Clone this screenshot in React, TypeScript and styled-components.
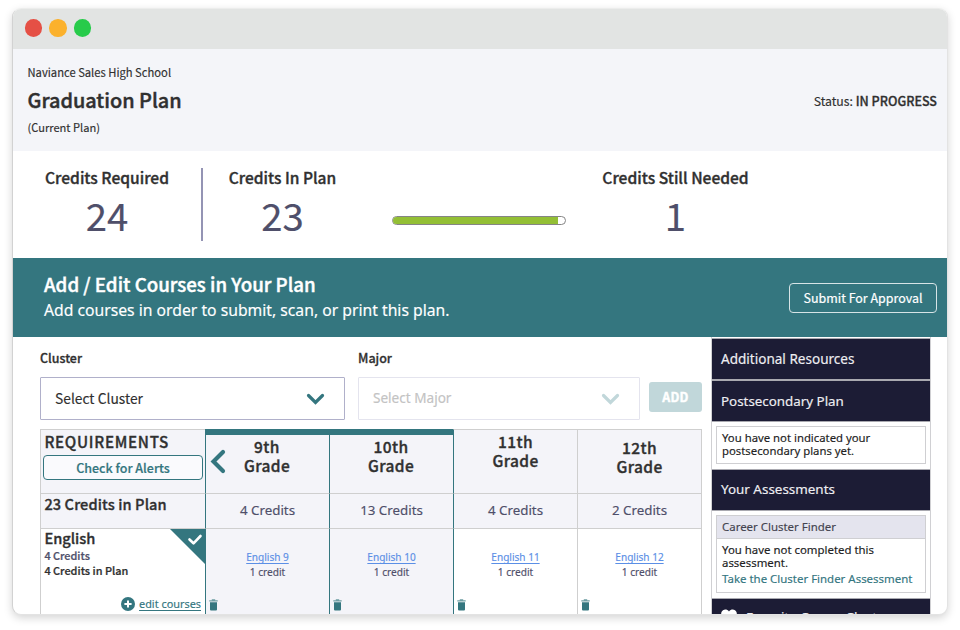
import React from "react";
import styled, { createGlobalStyle, css } from "styled-components";

const source = `"Noto Sans CJK SC", "Noto Sans", sans-serif`;
const ubuntu = `"Noto Sans", "Open Sans", sans-serif`;
const teal = "#34767f";
const ink = "#303030";
const slate = "#4f4f6a";
const line = "#cfcfcf";
const tint = "#f4f4f9";

const GlobalStyle = createGlobalStyle`
  * { box-sizing: border-box; }
  body { margin: 0; background: #fff; overflow: hidden; }
`;

type TextProps = {
  $size: number;
  $lh: number;
  $medium?: boolean;
  $alt?: boolean;
  $color?: string;
  $track?: number;
  $mt?: number;
};

const Text = styled.div<TextProps>`
  font-family: ${(p) => (p.$alt ? ubuntu : source)};
  font-size: ${(p) => p.$size}px;
  line-height: ${(p) => p.$lh}px;
  font-weight: ${(p) => (p.$medium ? 500 : 400)};
  color: ${(p) => p.$color ?? ink};
  letter-spacing: ${(p) => p.$track ?? 0}px;
  margin-top: ${(p) => p.$mt ?? 0}px;
  -webkit-text-stroke: ${(p) => (p.$medium ? p.$size * 0.022 : 0.15)}px currentColor;
  white-space: nowrap;
`;

const Stage = styled.main`
  width: 960px;
  height: 630px;
  padding: 8px 12px 15px 12px;
  background: #fff;
`;

const Window = styled.div`
  width: 936px;
  height: 607px;
  border-radius: 9px;
  overflow: hidden;
  display: flex;
  flex-direction: column;
  background: #fff;
  border: 1px solid #e3e3e3;
  border-top-color: #ecedec;
  border-left-color: #d2d2d2;
  box-shadow: 0 3px 9px rgba(0, 0, 0, 0.17);
`;

const TitleBar = styled.div`
  height: 40px;
  flex: none;
  display: flex;
  align-items: center;
  gap: 7px;
  padding: 0 0 2px 11.5px;
  background: #e2e4e3;
`;

const Light = styled.i<{ $color: string }>`
  width: 17.6px;
  height: 17.6px;
  border-radius: 50%;
  background: ${(p) => p.$color};
`;

const PlanHeader = styled.header`
  height: 102px;
  flex: none;
  display: flex;
  justify-content: space-between;
  padding: 15px 10px 0 14.5px;
  background: #f4f5f9;
`;

const Status = styled.div`
  display: flex;
  align-items: baseline;
  height: 20px;
  margin-top: 27px;
`;

const Summary = styled.section`
  height: 107px;
  flex: none;
  display: flex;
  padding-top: 17px;
`;

const Stat = styled.div<{ $width: number; $divided?: boolean }>`
  width: ${(p) => p.$width}px;
  height: 73px;
  text-align: center;
  ${(p) => p.$divided && css`border-right: 2px solid #9494b4;`}
`;

const Track = styled.div`
  width: 174px;
  height: 9px;
  margin: 48px 0 0 30px;
  border: 1px solid #858585;
  border-radius: 5px;
  background: #fff;
  overflow: hidden;
`;

const Fill = styled.div`
  width: 96%;
  height: 100%;
  background: #93bf35;
`;

const Banner = styled.section`
  height: 79px;
  flex: none;
  display: flex;
  justify-content: space-between;
  padding: 14px 10px 0 31px;
  background: ${teal};
`;

const SubmitButton = styled.button`
  width: 148px;
  height: 30px;
  margin-top: 11px;
  padding: 0 0 1px;
  border: 1px solid #d7e4e6;
  border-radius: 4px;
  background: transparent;
  color: #fff;
  font: 400 12.46px/24px ${source};
  -webkit-text-stroke: 0.2px currentColor;
`;

const Body = styled.div`
  flex: 1;
  min-height: 0;
  display: flex;
  overflow: hidden;
`;

const Planner = styled.section`
  width: 662px;
  margin-left: 27px;
  flex: none;
`;

const Picker = styled.div`
  height: 92px;
  display: flex;
  padding-top: 12px;
`;

const Field = styled.div<{ $width: number; $gap: number }>`
  width: ${(p) => p.$width}px;
  margin-right: ${(p) => p.$gap}px;
`;

const Select = styled.div<{ $disabled?: boolean }>`
  height: 43px;
  margin-top: 10px;
  display: flex;
  align-items: center;
  justify-content: space-between;
  padding: 0 19px 1px 14px;
  border: 1px solid ${(p) => (p.$disabled ? "#e4e4ee" : "#b0b0ca")};
  border-radius: 1px;

  svg {
    margin-top: 2px;
  }
`;

const AddButton = styled.button`
  width: 53px;
  height: 30px;
  margin-top: 33px;
  padding: 0;
  border: 0;
  border-radius: 3px;
  background: #c1d7da;
  color: #fff;
  font: 700 12.4px/24px ${source};
  letter-spacing: 0.3px;
  -webkit-text-stroke: 0.4px currentColor;
`;

const Table = styled.div`
  display: grid;
  grid-template-columns: 165px repeat(4, 124px);
  grid-template-rows: 64px 35px 90px;
  border-right: 1px solid ${line};
`;

const Cell = styled.div<{ $active?: boolean; $edge?: boolean; $plain?: boolean }>`
  border-top: 1px solid ${line};
  border-left: 1px solid ${(p) => (p.$edge ? teal : line)};
  background: ${(p) => (p.$plain ? "#fff" : tint)};
  min-width: 0;
`;

const Lead = styled(Cell)<{ $up?: number }>`
  padding-left: 3.4px;
  position: relative;

  > ${Text}:first-of-type {
    margin-top: ${(p) => -(p.$up ?? 0)}px;
  }
`;

const GradeHead = styled(Cell)<{ $top: number }>`
  text-align: center;
  padding-top: ${(p) => p.$top}px;
  position: relative;
  ${(p) =>
    p.$active &&
    css`
      border-top: 6px solid ${teal};
      border-left: 0;
      box-shadow: inset 1px 0 ${teal};
    `}
`;

const Centered = styled(Cell)`
  text-align: center;
`;

const Course = styled(Centered)`
  display: flex;
  flex-direction: column;
  align-items: center;
  padding-top: 20px;
`;

const CourseLink = styled(Text)`
  text-decoration: underline;
  text-underline-offset: 1.5px;
  text-decoration-thickness: 1px;
`;

const AlertsButton = styled.button`
  display: block;
  width: 160px;
  height: 25px;
  margin: 2px 0 0 -1.4px;
  padding: 0;
  border: 1px solid ${teal};
  border-radius: 4px;
  background: #fafafd;
  color: ${teal};
  font: 500 12.5px/22px ${source};
  -webkit-text-stroke: 0.2px currentColor;
`;

const BackArrow = styled.svg`
  position: absolute;
  left: 5px;
  top: 14px;
`;

const Corner = styled.svg`
  position: absolute;
  right: 0;
  top: 0;
`;

const EditRow = styled.div`
  display: flex;
  align-items: center;
  justify-content: flex-end;
  gap: 4px;
  margin-top: 18px;
  padding-right: 4px;
`;

const Trash = styled.svg`
  align-self: flex-start;
  margin: 19px 0 0 3px;
`;

const Sidebar = styled.aside`
  width: 220px;
  margin-left: 9px;
  flex: none;
  padding-top: 1px;
  border: 1px solid #d0d0d3;
  border-width: 0 1px;
`;

const PanelTitle = styled.div<{ $lift?: number }>`
  height: 42px;
  display: flex;
  align-items: center;
  gap: 9px;
  padding: 0 0 ${(p) => p.$lift ?? 0}px 9px;
  background: #1c1c35;
  border-top: 1px solid #a9a9b0;
  border-bottom: 1px solid #a9a9b0;
`;

const Card = styled.div<{ $height: number; $bottom: number }>`
  height: ${(p) => p.$height}px;
  margin: 4px 4px ${(p) => p.$bottom}px;
  border: 1px solid #cfcfd2;
  padding-left: 5px;
`;

const CardTitle = styled.div`
  height: 23px;
  margin-left: -5px;
  padding-left: 5px;
  background: #e4e4ee;
  border-bottom: 1px solid #cfcfd2;
`;

const Chevron = ({ color }: { color: string }) => (
  <svg width="19" height="13" viewBox="0 0 19 13">
    <path d="M2.5 2.5 9.5 9.5 16.5 2.5" fill="none" stroke={color} strokeWidth="3.2" strokeLinecap="round" />
  </svg>
);

const TrashIcon = () => (
  <Trash width="9" height="12" viewBox="0 0 9 12">
    <path d="M.3 1.9h8.4M2.8 1h3.4" stroke="#6d9da3" strokeWidth="1.3" fill="none" />
    <path d="M1 3.2h7v7.2q0 1-1 1H2q-1 0-1-1z" fill={teal} />
  </Trash>
);

const grades = [
  { name: "9th", total: "4 Credits", course: "English 9", top: 2, active: true, edge: true },
  { name: "10th", total: "13 Credits", course: "English 10", top: 2, active: true, edge: true },
  { name: "11th", total: "4 Credits", course: "English 11", top: 2, active: false, edge: true },
  { name: "12th", total: "2 Credits", course: "English 12", top: 8, active: false, edge: false },
];

export default function App() {
  return (
    <Stage>
      <GlobalStyle />
      <Window>
        <TitleBar>
          <Light $color="#e55045" />
          <Light $color="#fbb12c" />
          <Light $color="#27cb4a" />
        </TitleBar>

        <PlanHeader>
          <div>
            <Text $size={11.21} $lh={16}>Naviance Sales High School</Text>
            <Text $size={19.89} $lh={28} $mt={6} $medium>Graduation Plan</Text>
            <Text $size={11.1} $lh={16} $mt={5}>(Current Plan)</Text>
          </div>
          <Status>
            <Text as="span" $size={12.27} $lh={20}>Status:&nbsp;</Text>
            <Text as="span" $size={12.55} $lh={20} $medium>IN PROGRESS</Text>
          </Status>
        </PlanHeader>

        <Summary>
          <Stat $width={190} $divided>
            <Text $size={15.58} $lh={22} $mt={-2} $medium>Credits Required</Text>
            <Text $size={38.3} $lh={50} $mt={2} $color={slate}>24</Text>
          </Stat>
          <Stat $width={159}>
            <Text $size={15.53} $lh={22} $mt={-2} $medium>Credits In Plan</Text>
            <Text $size={38.3} $lh={50} $mt={2} $color={slate}>23</Text>
          </Stat>
          <Track>
            <Fill />
          </Track>
          <Stat $width={219}>
            <Text $size={15.59} $lh={22} $mt={-2} $medium>Credits Still Needed</Text>
            <Text $size={38.3} $lh={50} $mt={2} $color={slate}>1</Text>
          </Stat>
        </Summary>

        <Banner>
          <div>
            <Text $size={18.71} $lh={24} $color="#fff" $medium>Add / Edit Courses in Your Plan</Text>
            <Text $size={15.72} $lh={24} $mt={2} $color="#fff" $alt>
              Add courses in order to submit, scan, or print this plan.
            </Text>
          </div>
          <SubmitButton>Submit For Approval</SubmitButton>
        </Banner>

        <Body>
          <Planner>
            <Picker>
              <Field $width={305} $gap={13}>
                <Text $size={12.44} $lh={18} $medium>Cluster</Text>
                <Select>
                  <Text $size={13.82} $lh={20}>Select Cluster</Text>
                  <Chevron color={teal} />
                </Select>
              </Field>
              <Field $width={282} $gap={9}>
                <Text $size={12.51} $lh={18} $medium>Major</Text>
                <Select $disabled>
                  <Text $size={13.58} $lh={20} $color="#c3c3c3" $alt>Select Major</Text>
                  <Chevron color="#c1d7da" />
                </Select>
              </Field>
              <AddButton>ADD</AddButton>
            </Picker>

            <Table>
              <Lead $up={1}>
                <Text $size={15.2} $lh={24} $track={0.7} $medium>REQUIREMENTS</Text>
                <AlertsButton>Check for Alerts</AlertsButton>
              </Lead>
              {grades.map((g, i) => (
                <GradeHead key={g.name} $active={g.active} $edge={g.edge} $top={g.top}>
                  {i === 0 && (
                    <BackArrow width="17" height="26" viewBox="0 0 17 26">
                      <path d="M13 3 3.5 12.5 13 22" fill="none" stroke={teal} strokeWidth="4.2" strokeLinecap="round" />
                    </BackArrow>
                  )}
                  <Text $size={15.5} $lh={18.5} $track={0.4} $medium>
                    {g.name}
                    <br />
                    Grade
                  </Text>
                </GradeHead>
              ))}

              <Lead $up={1}>
                <Text $size={14.6} $lh={22} $track={0.1} $medium>23 Credits in Plan</Text>
              </Lead>
              {grades.map((g) => (
                <Centered key={g.name} $edge={g.edge}>
                  <Text $size={13.32} $lh={32} $color={slate} $alt>{g.total}</Text>
                </Centered>
              ))}

              <Lead $plain $up={1}>
                <Corner width="35" height="36" viewBox="0 0 35 36">
                  <path d="M0 0h35v35z" fill={teal} />
                  <path d="M19.5 10.5 23.5 14.3 30.5 7" fill="none" stroke="#fff" strokeWidth="2.6" strokeLinecap="round" strokeLinejoin="round" />
                </Corner>
                <Text $size={14.62} $lh={20} $medium>English</Text>
                <Text $size={10.86} $lh={15} $color={slate} $medium>4 Credits</Text>
                <Text $size={10.92} $lh={15} $medium>4 Credits in Plan</Text>
                <EditRow>
                  <svg width="14" height="14" viewBox="0 0 14 14">
                    <circle cx="7" cy="7" r="7" fill={teal} />
                    <path d="M7 3.4v7.2M3.4 7h7.2" stroke="#fff" strokeWidth="2" />
                  </svg>
                  <CourseLink $size={10.88} $lh={16} $color={teal} $alt>edit courses</CourseLink>
                </EditRow>
              </Lead>
              {grades.map((g) => (
                <Course key={g.name} $edge={g.edge} $plain={!g.active}>
                  <CourseLink $size={10.06} $lh={16} $color="#5b8fe6" $alt>{g.course}</CourseLink>
                  <Text $size={10.13} $lh={15} $color={slate} $alt>1 credit</Text>
                  <TrashIcon />
                </Course>
              ))}
            </Table>
          </Planner>

          <Sidebar>
            <PanelTitle>
              <Text $size={13.55} $lh={20} $color="#eeeef2" $alt>Additional Resources</Text>
            </PanelTitle>
            <PanelTitle>
              <Text $size={13.37} $lh={20} $color="#eeeef2" $alt>Postsecondary Plan</Text>
            </PanelTitle>
            <Card $height={38} $bottom={5}>
              <Text $size={11.34} $lh={13.2} $mt={4} $color="#222" $alt>
                You have not indicated your
                <br />
                postsecondary plans yet.
              </Text>
            </Card>
            <PanelTitle $lift={2}>
              <Text $size={13.43} $lh={20} $color="#eeeef2" $alt>Your Assessments</Text>
            </PanelTitle>
            <Card $height={78} $bottom={5}>
              <CardTitle>
                <Text $size={11.45} $lh={21} $color="#444450" $alt>Career Cluster Finder</Text>
              </CardTitle>
              <Text $size={11.41} $lh={13.2} $mt={4} $color="#222" $alt>
                You have not completed this
                <br />
                assessment.
              </Text>
              <Text $size={11.46} $lh={16} $mt={2} $color={teal} $alt>Take the Cluster Finder Assessment</Text>
            </Card>
            <PanelTitle $lift={5}>
              <svg width="16" height="15" viewBox="0 0 16 15">
                <path d="M8 14.5 1.3 8C-.6 5.8 0 2.5 2 1.2 4 0 6.500.5 8 2.500 9.500.5 12 0 14 1.200 16 2.500 16.600 5.800 14.700 8z" fill="#fff" />
              </svg>
              <Text $size={13.4} $lh={20} $color="#eeeef2" $alt>Favorite Career Clusters</Text>
            </PanelTitle>
          </Sidebar>
        </Body>
      </Window>
    </Stage>
  );
}
